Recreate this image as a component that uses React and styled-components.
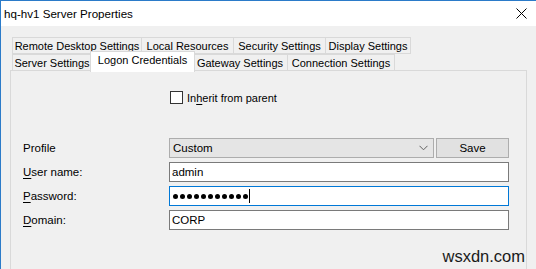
import React from 'react';
import styled, { createGlobalStyle } from 'styled-components';

const GlobalStyle = createGlobalStyle`
  html, body {
    margin: 0;
    padding: 0;
    background: #ffffff;
    overflow: hidden;
  }
  body {
    font-family: "Liberation Sans", Arial, sans-serif;
    font-size: 11.5px;
    color: #000;
  }
`;

const Window = styled.div`
  position: relative;
  width: 536px;
  height: 269px;
  box-sizing: border-box;
  border-top: 1px solid #2b7bc9;
  border-left: 1px solid #2b7bc9;
  display: flex;
  flex-direction: column;
  overflow: hidden;
`;

const TitleBar = styled.div`
  height: 25px;
  background: #ffffff;
  display: flex;
  align-items: center;
  justify-content: space-between;
  padding: 0 9px 0 3px;
  flex-shrink: 0;
`;

const Title = styled.span`
  font-size: 11.6px;
  padding-bottom: 1px;
`;

const Body = styled.div`
  flex: 1;
  background: #f0f0f0;
  padding: 11px 9px 0 9px;
  display: flex;
  flex-direction: column;
`;

const TabRow = styled.div`
  display: flex;
  height: 17px;
  padding-left: 2px;
  position: relative;
  z-index: ${p => (p.front ? 2 : 1)};
`;

const Tab = styled.div`
  box-sizing: border-box;
  width: ${p => p.w}px;
  height: ${p => (p.active ? 21 : 17)}px;
  margin-top: ${p => (p.active ? -3 : 0)}px;
  margin-left: ${p => (p.active ? -2 : 0)}px;
  margin-right: ${p => (p.active ? -2 : 0)}px;
  background: ${p => (p.active ? '#ffffff' : '#f0f0f0')};
  border: 1px solid #d9d9d9;
  border-left-width: ${p => (p.first || p.active ? 1 : 0)}px;
  border-bottom: ${p => (p.active ? 'none' : '1px solid #d9d9d9')};
  display: flex;
  align-items: center;
  justify-content: center;
  white-space: nowrap;
  font-size: 11px;
  position: relative;
  z-index: ${p => (p.active ? 3 : 1)};
  padding-bottom: ${p => (p.active ? 4 : 0)}px;
`;

const Panel = styled.div`
  flex: 1;
  margin-top: -1px;
  border: 1px solid #d9d9d9;
  border-bottom: none;
  padding: 20px 0 0 12px;
  display: flex;
  flex-direction: column;
`;

const CheckRow = styled.label`
  display: flex;
  align-items: center;
  gap: 4px;
  margin-left: 147px;
  height: 13px;
  font-size: 11px;
`;

const Box = styled.span`
  width: 11px;
  height: 11px;
  border: 1px solid #333333;
  background: #ffffff;
`;

const Key = styled.span`
  text-decoration: underline;
  text-underline-offset: 2px;
`;

const Form = styled.div`
  display: grid;
  grid-template-columns: 146px 340px;
  grid-auto-rows: 20px;
  row-gap: 4px;
  margin-top: 34px;
`;

const Label = styled.div`
  display: flex;
  align-items: center;
`;

const ComboRow = styled.div`
  display: flex;
  gap: 2px;
`;

const Combo = styled.div`
  box-sizing: border-box;
  width: 265px;
  height: 20px;
  background: #e5e5e5;
  border: 1px solid #adadad;
  display: flex;
  align-items: center;
  justify-content: space-between;
  padding: 0 5px 0 3px;
`;

const Button = styled.div`
  box-sizing: border-box;
  width: 73px;
  height: 20px;
  background: #e1e1e1;
  border: 1px solid #adadad;
  display: flex;
  align-items: center;
  justify-content: center;
`;

const Field = styled.div`
  box-sizing: border-box;
  width: 340px;
  height: 20px;
  background: #ffffff;
  border: 1px solid ${p => (p.focused ? '#0078d7' : '#7a7a7a')};
  display: flex;
  align-items: center;
  padding-left: 2px;
`;

const Dots = styled.div`
  display: flex;
  align-items: center;
  gap: 2px;
  padding-left: 1px;
`;

const Dot = styled.span`
  width: 5px;
  height: 5px;
  border-radius: 50%;
  background: #000;
`;

const Caret = styled.span`
  width: 1px;
  height: 14px;
  background: #000;
  margin-left: 1px;
`;

const Watermark = styled.div`
  position: absolute;
  right: 11px;
  bottom: 3px;
  font-size: 16.5px;
  color: #1a1a1a;
`;

const Chevron = () => (
  <svg width="9" height="6" viewBox="0 0 9 6">
    <path d="M0.5 0.8 L4.5 4.8 L8.5 0.8" fill="none" stroke="#606060" strokeWidth="1" />
  </svg>
);

const CloseIcon = () => (
  <svg width="11" height="11" viewBox="0 0 11 11">
    <path d="M0.5 0.5 L10.5 10.5 M10.5 0.5 L0.5 10.5" stroke="#000" strokeWidth="1" />
  </svg>
);

const App = () => {
  return (
    <>
      <GlobalStyle />
      <Window>
        <TitleBar>
          <Title>hq-hv1 Server Properties</Title>
          <CloseIcon />
        </TitleBar>
        <Body>
          <TabRow>
            <Tab w={130} first>Remote Desktop Settings</Tab>
            <Tab w={92}>Local Resources</Tab>
            <Tab w={92}>Security Settings</Tab>
            <Tab w={85}>Display Settings</Tab>
          </TabRow>
          <TabRow front>
            <Tab w={80} first>Server Settings</Tab>
            <Tab w={105} active>Logon Credentials</Tab>
            <Tab w={95}>Gateway Settings</Tab>
            <Tab w={107}>Connection Settings</Tab>
          </TabRow>
          <Panel>
            <CheckRow>
              <Box />
              <span>In<Key>h</Key>erit from parent</span>
            </CheckRow>
            <Form>
              <Label>Profile</Label>
              <ComboRow>
                <Combo>
                  <span>Custom</span>
                  <Chevron />
                </Combo>
                <Button>Save</Button>
              </ComboRow>
              <Label><Key>U</Key>ser name:</Label>
              <Field>admin</Field>
              <Label><Key>P</Key>assword:</Label>
              <Field focused>
                <Dots>
                  {Array.from({ length: 11 }).map((_, i) => (
                    <Dot key={i} />
                  ))}
                </Dots>
                <Caret />
              </Field>
              <Label><Key>D</Key>omain:</Label>
              <Field>CORP</Field>
            </Form>
          </Panel>
        </Body>
        <Watermark>wsxdn.com</Watermark>
      </Window>
    </>
  );
};

export default App;
